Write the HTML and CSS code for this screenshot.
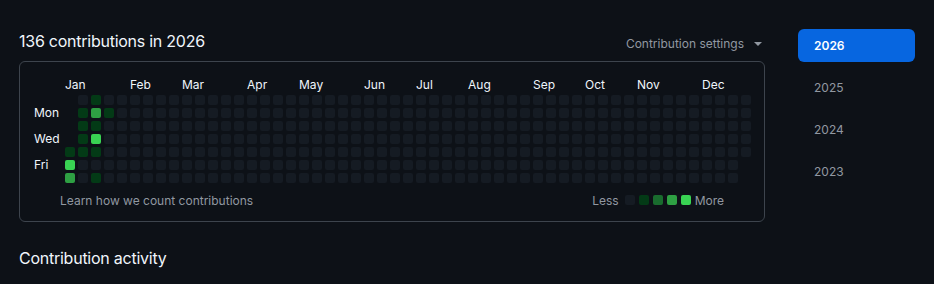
FILE: index.html
```html
<!DOCTYPE html>
<html lang="en">
<head>
  <meta charset="UTF-8" />
  <title>Contributions</title>
  <link rel="stylesheet" href="styles.css">
</head>
<body>
  <div class="page">
    <div class="main">
      <div class="graph-header">
        <h2 class="graph-title">136 contributions in 2026</h2>
        <button class="settings">Contribution settings <span class="caret"></span></button>
      </div>

      <div class="graph-box">
        <div class="calendar" id="calendar">
          <span class="day-label mon">Mon</span>
          <span class="day-label wed">Wed</span>
          <span class="day-label fri">Fri</span>
        </div>
        <div class="graph-footer">
          <a href="#" class="learn">Learn how we count contributions</a>
          <div class="legend">
            <span>Less</span>
            <span class="cell"></span>
            <span class="cell l1"></span>
            <span class="cell l2"></span>
            <span class="cell l3"></span>
            <span class="cell l4"></span>
            <span>More</span>
          </div>
        </div>
      </div>

      <h2 class="activity-title">Contribution activity</h2>
    </div>

    <nav class="years">
      <a href="#" class="year selected">2026</a>
      <a href="#" class="year">2025</a>
      <a href="#" class="year">2024</a>
      <a href="#" class="year">2023</a>
    </nav>
  </div>

  <script>
    const calendar = document.getElementById('calendar');

    // week the month label sits over (first week whose Sunday is in that month)
    const months = [
      ['Jan', 0], ['Feb', 5], ['Mar', 9], ['Apr', 14], ['May', 18], ['Jun', 23],
      ['Jul', 27], ['Aug', 31], ['Sep', 36], ['Oct', 40], ['Nov', 44], ['Dec', 49]
    ];

    // levels keyed by "week-day"
    const levels = {
      '0-4': 1, '0-5': 4, '0-6': 3,
      '1-1': 1, '1-2': 1, '1-3': 1, '1-4': 1,
      '2-0': 1, '2-1': 3, '2-2': 1, '2-3': 4, '2-4': 1, '2-6': 1,
      '3-1': 1
    };

    months.forEach(([name, week]) => {
      const label = document.createElement('span');
      label.className = 'month-label';
      label.textContent = name;
      label.style.gridColumn = (week + 2) + ' / span 4';
      calendar.appendChild(label);
    });

    const firstDay = 4; // Jan 1 2026 is a Thursday
    for (let week = 0; week < 53; week++) {
      for (let day = 0; day < 7; day++) {
        const index = week * 7 + day - firstDay;
        if (index < 0 || index >= 365) continue;
        const cell = document.createElement('span');
        const level = levels[week + '-' + day];
        cell.className = level ? 'cell l' + level : 'cell';
        cell.style.gridColumn = week + 2;
        cell.style.gridRow = day + 2;
        calendar.appendChild(cell);
      }
    }
  </script>
</body>
</html>
```

FILE: styles.css
```css
html, body {
  margin: 0;
  background: #0d1117;
  color: #f0f6fc;
  font-family: Inter, "Noto Sans", sans-serif;
}
.page {
  display: flex;
  align-items: flex-start;
  padding: 29px 19px 0 19px;
}
.main {
  width: 746px;
}
.graph-header {
  display: flex;
  justify-content: space-between;
  align-items: flex-end;
  margin-bottom: 8px;
}
.graph-title,
.activity-title {
  margin: 0;
  font-size: 16px;
  font-weight: 400;
  line-height: 24px;
  letter-spacing: -0.25px;
}
.settings {
  display: flex;
  align-items: center;
  gap: 10px;
  padding: 0 3px 0 0;
  border: 0;
  background: none;
  color: #9198a1;
  font-family: inherit;
  font-size: 12px;
  line-height: 18px;
}
.caret {
  width: 0;
  height: 0;
  border-left: 4px solid transparent;
  border-right: 4px solid transparent;
  border-top: 4px solid #9198a1;
}
.graph-box {
  border: 1px solid #3d444d;
  border-radius: 6px;
  padding: 15px 13px 12px 14px;
}
.calendar {
  display: grid;
  grid-template-columns: 28px repeat(53, 10px);
  grid-template-rows: 15px repeat(7, 10px);
  gap: 3px;
  font-size: 12px;
}
.month-label {
  grid-row: 1;
  line-height: 15px;
  white-space: nowrap;
}
.day-label {
  grid-column: 1;
  line-height: 10px;
  white-space: nowrap;
}
.day-label.mon { grid-row: 3; }
.day-label.wed { grid-row: 5; }
.day-label.fri { grid-row: 7; }
.cell {
  width: 10px;
  height: 10px;
  border-radius: 2px;
  background: #151b23;
}
.cell.l1 { background: #033a16; }
.cell.l2 { background: #196c2e; }
.cell.l3 { background: #2ea043; }
.cell.l4 { background: #39d353; }
.graph-footer {
  display: flex;
  justify-content: space-between;
  align-items: center;
  height: 18px;
  margin: 8px 27px 0 26px;
  font-size: 12px;
  color: #9198a1;
}
.learn {
  color: #9198a1;
  text-decoration: none;
}
.legend {
  display: flex;
  align-items: center;
  gap: 4px;
}
.legend span:first-child {
  margin-right: 2px;
}
.activity-title {
  margin-top: 24px;
}
.years {
  display: flex;
  flex-direction: column;
  gap: 9px;
  width: 117px;
  margin-left: 33px;
}
.year {
  display: block;
  height: 33px;
  line-height: 33px;
  padding-left: 16px;
  border-radius: 6px;
  color: #9198a1;
  font-size: 12px;
  text-decoration: none;
}
.year.selected {
  background: #0766e0;
  color: #ffffff;
  font-weight: 600;
}
```
